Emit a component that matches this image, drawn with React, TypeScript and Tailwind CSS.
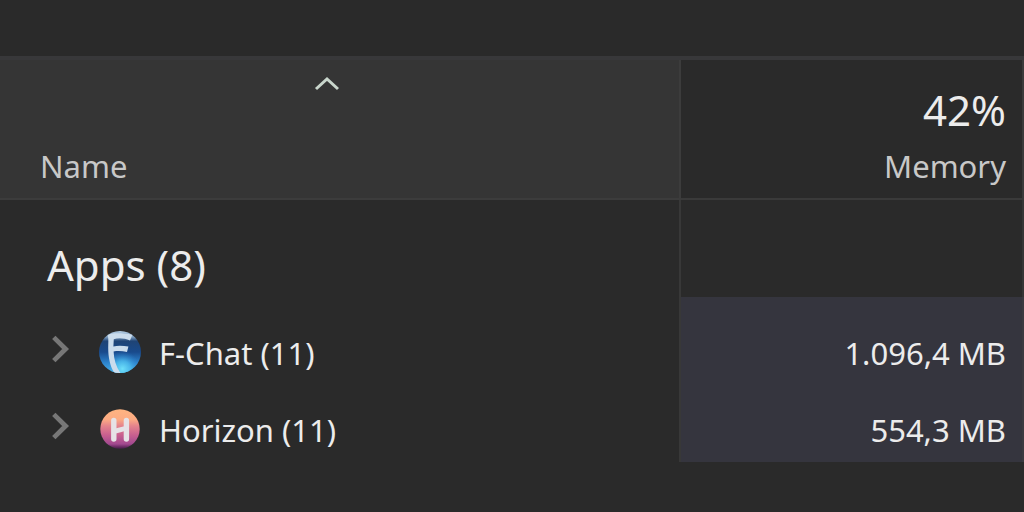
function ChevronRight() {
  return (
    <svg viewBox="0 0 18 28" className="h-7 w-[18px]" fill="none" stroke="#777777" strokeWidth="4.8" aria-hidden="true">
      <path d="M1.8 2.4 L13.6 14 L1.8 25.6" />
    </svg>
  );
}

function FChatLogo() {
  return (
    <svg viewBox="0 0 42 42" className="size-[42px]" aria-hidden="true">
      <defs>
        <linearGradient id="fchat-base" x1="0" y1="0" x2="0" y2="1">
          <stop offset="0" stopColor="#b4cde4" />
          <stop offset="0.14" stopColor="#7f9fc0" />
          <stop offset="0.24" stopColor="#1f4475" />
          <stop offset="0.5" stopColor="#194a8c" />
          <stop offset="0.75" stopColor="#2c82cb" />
          <stop offset="1" stopColor="#4db4e8" />
        </linearGradient>
        <radialGradient id="fchat-glow" cx="0.56" cy="0.9" r="0.42">
          <stop offset="0" stopColor="#6fe0fa" />
          <stop offset="0.45" stopColor="#4fc0f0" stopOpacity="0.75" />
          <stop offset="1" stopColor="#2b7fd0" stopOpacity="0" />
        </radialGradient>
        <clipPath id="fchat-clip">
          <circle cx="21" cy="21" r="21" />
        </clipPath>
      </defs>
      <g clipPath="url(#fchat-clip)">
        <rect width="42" height="42" fill="url(#fchat-base)" />
        <rect width="42" height="42" fill="url(#fchat-glow)" />
        <path
          d="M8.6 4 C13 1.5 24 2.2 33.4 3.8 L31 9.4 C25.5 7 19 6.4 14.8 8.2 L14.4 15.6 C19 14.2 24.5 14.8 29.4 15.6 L28 21 C23.5 19.8 18.5 19.6 14.6 20.4 C14.9 28 17 35.5 21.4 42 L15.4 42 C11 35 9.2 26 9.2 17 C9.2 12 9.8 8 8.6 4 Z"
          fill="#cbdcec"
        />
      </g>
    </svg>
  );
}

function HorizonLogo() {
  return (
    <svg viewBox="0 0 40 40" className="size-10" aria-hidden="true">
      <defs>
        <linearGradient id="horizon-base" x1="0" y1="0" x2="0" y2="1">
          <stop offset="0" stopColor="#ffb481" />
          <stop offset="0.25" stopColor="#fdac83" />
          <stop offset="0.42" stopColor="#e5848c" />
          <stop offset="0.65" stopColor="#c9608f" />
          <stop offset="0.88" stopColor="#a24990" />
          <stop offset="0.96" stopColor="#63285f" />
          <stop offset="1" stopColor="#45204a" />
        </linearGradient>
      </defs>
      <circle cx="20" cy="20" r="19.7" fill="url(#horizon-base)" />
      <path d="M13.8 11.5 V30 M26.4 11.5 V30" stroke="#e6e2e6" strokeWidth="5.4" strokeLinecap="round" fill="none" />
      <path d="M14 22 C18 22 22 19.6 26.4 19.6" stroke="#e6e2e6" strokeWidth="4.8" fill="none" />
    </svg>
  );
}

const apps = [
  {
    name: "F-Chat (11)",
    memory: "1.096,4 MB",
    logo: <FChatLogo />,
    cell: "h-[94px] pt-[18px]",
  },
  {
    name: "Horizon (11)",
    memory: "554,3 MB",
    logo: <HorizonLogo />,
    cell: "h-[71px] pb-0 pt-[6px]",
  },
];

export default function App() {
  return (
    <main className="min-h-screen bg-[#2a2a2a] pt-14 font-['Noto_Sans','Open_Sans',sans-serif] text-[#ececec]">
      <table className="w-full table-fixed border-separate border-spacing-0 border-t-4 border-[#38383a]">
        <colgroup>
          <col className="w-[66.5%]" />
          <col />
        </colgroup>
        <thead>
          <tr className="text-[31px] leading-10 text-[#c8c8c8]">
            <th
              scope="col"
              aria-sort="ascending"
              className="h-[140px] border-r-2 border-b-2 border-[#3c3c3c] bg-[#353535] p-0 text-left font-normal"
            >
              <button type="button" className="flex h-[138px] w-full flex-col justify-between pt-4 pb-3 pl-10 text-left">
                <svg
                  viewBox="0 0 26 16"
                  className="ml-[274px] h-4 w-[26px]"
                  fill="none"
                  stroke="#c9d6cc"
                  strokeWidth="3"
                  aria-hidden="true"
                >
                  <path d="M2 13 L13 3 L24 13" />
                </svg>
                <span>Name</span>
              </button>
            </th>
            <th scope="col" className="border-r-2 border-b-2 border-[#3a3a3a] p-0 font-normal">
              <button type="button" className="flex h-[138px] w-full flex-col items-end justify-end pr-4 pb-3">
                <span className="mb-3 text-[42px] leading-[48px] text-[#ececec]">42%</span>
                <span>Memory</span>
              </button>
            </th>
          </tr>
        </thead>
        <tbody className="text-[31px] leading-10">
          <tr>
            <th scope="rowgroup" className="h-[97px] border-r-2 border-[#383838] pt-8 pl-[47px] text-left text-[42px] leading-[64px] font-normal">
              Apps (8)
            </th>
            <td className="border-r-2 border-[#353535]" />
          </tr>
          {apps.map((app) => (
            <tr key={app.name}>
              <td className={`border-r-2 border-[#383838] pl-[52px] ${app.cell}`}>
                <div className="flex items-center">
                  <button type="button" aria-label={`Expand ${app.name}`} className="mr-[29px] pb-2">
                    <ChevronRight />
                  </button>
                  <span className="mr-[18px] flex w-[42px] justify-center pb-[2px]">{app.logo}</span>
                  <span>{app.name}</span>
                </div>
              </td>
              <td className={`border-r-2 border-[#3a3a40] bg-[#35353e] pr-4 text-right ${app.cell}`}>{app.memory}</td>
            </tr>
          ))}
        </tbody>
      </table>
    </main>
  );
}
